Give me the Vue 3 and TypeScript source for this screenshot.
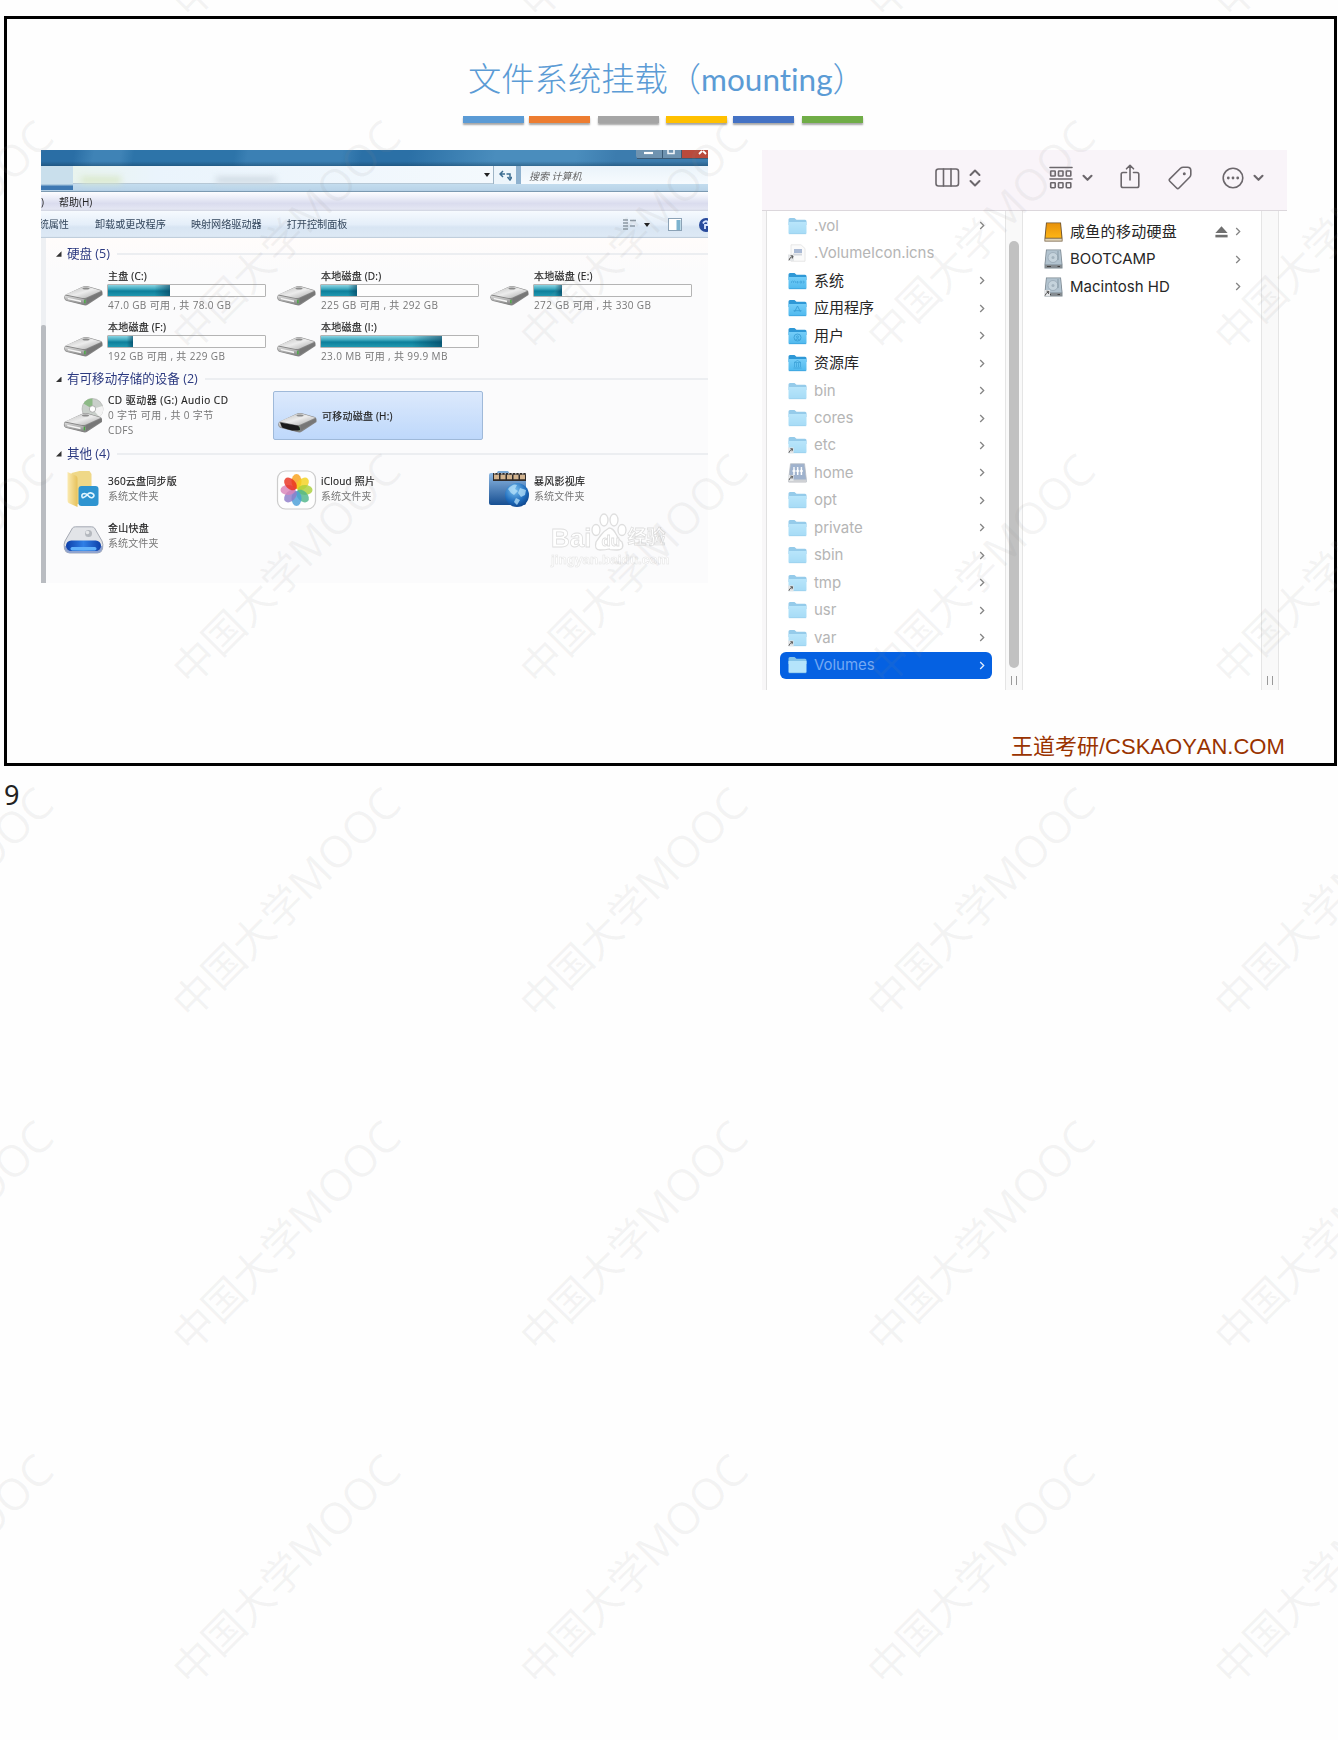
<script setup lang="ts">
interface Disk { name: string; info: string; used: number }
interface Entry { name: string; icon: string; dim: boolean; alias?: boolean; glyph?: string; leaf?: boolean; selected?: boolean }

const stripes: { color: string; gap: number }[] = [
  { color: '#5b9bd5', gap: 0 },
  { color: '#ed7d31', gap: 5 },
  { color: '#a5a5a5', gap: 7.5 },
  { color: '#ffc000', gap: 7 },
  { color: '#4472c4', gap: 6 },
  { color: '#70ad47', gap: 8 },
]

const disks: Disk[] = [
  { name: '主盘 (C:)', info: '47.0 GB 可用 , 共 78.0 GB', used: 39.5 },
  { name: '本地磁盘 (D:)', info: '225 GB 可用 , 共 292 GB', used: 23 },
  { name: '本地磁盘 (E:)', info: '272 GB 可用 , 共 330 GB', used: 18 },
  { name: '本地磁盘 (F:)', info: '192 GB 可用 , 共 229 GB', used: 16 },
  { name: '本地磁盘 (I:)', info: '23.0 MB 可用 , 共 99.9 MB', used: 77 },
]

const others = [
  { name: '360云盘同步版', icon: 'cloud' },
  { name: 'iCloud 照片', icon: 'photos' },
  { name: '暴风影视库', icon: 'storm' },
  { name: '金山快盘', icon: 'kdisk' },
]

const entries: Entry[] = [
  { name: '.vol', icon: 'folder', dim: true },
  { name: '.VolumeIcon.icns', icon: 'file', dim: true, leaf: true },
  { name: '系统', icon: 'folder', dim: false, glyph: 'mac' },
  { name: '应用程序', icon: 'folder', dim: false, glyph: 'apps' },
  { name: '用户', icon: 'folder', dim: false, glyph: 'user' },
  { name: '资源库', icon: 'folder', dim: false, glyph: 'lib' },
  { name: 'bin', icon: 'folder', dim: true },
  { name: 'cores', icon: 'folder', dim: true },
  { name: 'etc', icon: 'folder', dim: true, alias: true },
  { name: 'home', icon: 'home', dim: true, alias: true },
  { name: 'opt', icon: 'folder', dim: true },
  { name: 'private', icon: 'folder', dim: true },
  { name: 'sbin', icon: 'folder', dim: true },
  { name: 'tmp', icon: 'folder', dim: true, alias: true },
  { name: 'usr', icon: 'folder', dim: true },
  { name: 'var', icon: 'folder', dim: true, alias: true },
  { name: 'Volumes', icon: 'folder', dim: true, selected: true },
]

const volumes = [
  { name: '咸鱼的移动硬盘', icon: 'orange', eject: true },
  { name: 'BOOTCAMP', icon: 'hd', eject: false },
  { name: 'Macintosh HD', icon: 'hd', eject: false, alias: true },
]

const petals = ['#f9a11b', '#f3d21f', '#a9cf3a', '#4fb68a', '#4a9fd8', '#8d7cc9', '#d982b8', '#e9301f']

const marks: { x: number; y: number }[] = []
for (let j = -3; j <= 2; j++) {
  for (let i = -1; i <= 3; i++) marks.push({ x: 308 + 347.3 * i, y: 903.5 + 333.4 * j })
}
</script>

<template>
  <div class="page">
    <svg class="defs" width="0" height="0">
      <defs>
        <linearGradient id="dTop" x1="0" y1="0" x2="1" y2="1">
          <stop offset="0" stop-color="#b9b9b9" /><stop offset=".5" stop-color="#ececec" /><stop offset="1" stop-color="#a5a5a5" />
        </linearGradient>
        <linearGradient id="dFront" x1="0" y1="0" x2="0" y2="1">
          <stop offset="0" stop-color="#dedede" /><stop offset="1" stop-color="#7d7d7d" />
        </linearGradient>
        <linearGradient id="fold" x1="0" y1="0" x2="0" y2="1">
          <stop offset="0" stop-color="#74cdf8" /><stop offset="1" stop-color="#4fb9ee" />
        </linearGradient>
        <linearGradient id="yel" x1="0" y1="0" x2="1" y2="0">
          <stop offset="0" stop-color="#fbeab0" /><stop offset="1" stop-color="#e6c25c" />
        </linearGradient>
        <linearGradient id="blu" x1="0" y1="0" x2="0" y2="1">
          <stop offset="0" stop-color="#8fb9e3" /><stop offset="1" stop-color="#174f92" />
        </linearGradient>
        <linearGradient id="org" x1="0" y1="0" x2="0" y2="1">
          <stop offset="0" stop-color="#e8920c" /><stop offset="1" stop-color="#fdb515" />
        </linearGradient>
        <linearGradient id="well" x1="0" y1="0" x2="1" y2="0">
          <stop offset="0" stop-color="#0d3fa8" /><stop offset=".5" stop-color="#2f7fe6" /><stop offset="1" stop-color="#0d3fa8" />
        </linearGradient>
        <radialGradient id="globe" cx=".4" cy=".3" r=".8">
          <stop offset="0" stop-color="#7cc3f2" /><stop offset=".6" stop-color="#1f6cbc" /><stop offset="1" stop-color="#0c3c80" />
        </radialGradient>
        <symbol id="drive" viewBox="0 0 39 22">
          <path d="M1 10 L18 2 Q21 .6 24 1.300 L37 5 Q39 6 38.500 10 L24 19.500 Q22 21 19 20 L3 16 Q0 15 .3 12Z" fill="#858585" />
          <path d="M1.500 9.500 L18 2.200 Q21 1 24 1.700 L37.500 5.800 L22 12.700 Q20 13.400 17 12.800Z" fill="url(#dTop)" />
          <path d="M1 10.500 L18 13.700 Q21 14 22 16 L22 19 Q21 20.300 18 19.300 L3 15.500 Q1 15 1 13Z" fill="url(#dFront)" />
          <path d="M3.500 12.700 L17 15.500 L17 17.200 L4 14.300Z" fill="#f4f4f4" />
          <path d="M22.500 13.500 L38 6.500 L38 9.500 L22.500 19Z" fill="#777" />
          <ellipse cx="22" cy="3.600" rx="3.500" ry="1" fill="#8b8b8b" />
          <rect x="20.200" y="14.800" width="1.400" height="3.500" fill="#43a83d" />
        </symbol>
        <symbol id="chev" viewBox="0 0 6 9"><path d="M1.200 1 L4.700 4.500 L1.200 8" fill="none" stroke="currentColor" stroke-width="1.300" /></symbol>
        <symbol id="alias" viewBox="0 0 7 7"><rect width="6" height="6.500" y=".5" fill="#e4e6e8" /><path d="M1 6.200 Q1.500 3.500 4.800 2.200 M2.600 1.700 L5 2 L4.300 4.500" fill="none" stroke="#555" stroke-width="1" /></symbol>
      </defs>
    </svg>

    <section class="slide">
      <h1>文件系统挂载（<span>mounting</span>）</h1>
      <div class="stripes">
        <i v-for="s in stripes" :key="s.color" :style="{ background: s.color, marginLeft: s.gap + 'px' }" />
      </div>

      <div class="shots">
        <div class="win"><div class="soft">
          <div class="w-title">
            <svg width="72" height="9" viewBox="0 0 72 9">
              <path d="M0 0H26V8.500H3Q0 8.500 0 5.500Z" fill="#6f93b0" /><rect x="27" width="18" height="8.500" fill="#6f93b0" /><rect x="46" width="26" height="8.500" fill="#b94a3c" />
              <path d="M26.500 0v8.500M45.500 0v8.500M1 8.500H72" stroke="#3b5a75" />
              <path d="M8 3h9" stroke="#fff" stroke-width="2.200" /><path d="M32 0v3.500h6V0" fill="none" stroke="#f2f6f9" stroke-width="1.600" /><path d="M63 4l3-3M70 4l-3-3" stroke="#fff" stroke-width="1.800" />
            </svg>
          </div>
          <div class="w-addr">
            <div class="crumb" />
            <div class="path"><span class="smear" /><span class="smear grey" /><i class="tri" /></div>
            <div class="refresh">
              <svg width="13" height="11" viewBox="0 0 13 11"><path d="M1 4h5M4 1L1 4l3 3M7.500 4H11v4M8.500 7L11 10l2-3" fill="none" stroke="#3d6d91" stroke-width="1.500" /></svg>
            </div>
            <div class="search">搜索 计算机</div>
          </div>
          <div class="w-menu"><span>)</span><span>帮助(H)</span></div>
          <div class="w-tools">
            <span class="cut">统属性</span><span>卸载或更改程序</span><span>映射网络驱动器</span><span>打开控制面板</span>
            <div class="w-icons">
              <svg width="13" height="13" viewBox="0 0 13 13"><path d="M0 2h5M0 5h5M0 8h5M0 11h5M7 2.500h6M7 8h5" stroke="#8c99a5" stroke-width="1.600" /></svg>
              <i class="tri" />
              <svg class="pane" width="14" height="13" viewBox="0 0 14 13"><rect x=".5" y=".5" width="13" height="12" fill="#fff" stroke="#8ba2b6" /><rect x="8.500" y="2" width="4" height="10" fill="#7db3cf" /></svg>
              <svg class="help" width="14" height="14" viewBox="0 0 14 14"><circle cx="7" cy="7" r="7" fill="#284a9c" /><path d="M4 5.500Q6 2 9 4v3H6v4" fill="none" stroke="#dbe6ff" stroke-width="1.800" /></svg>
            </div>
          </div>
          <div class="w-main">
            <div class="rail"><i /></div>
            <div class="w-list">
              <div class="group g1"><i class="open" />硬盘 (5)<hr /></div>
              <div class="grid">
                <div v-for="d in disks" :key="d.name" class="disk">
                  <svg class="ic" width="39" height="22"><use href="#drive" /></svg>
                  <div>
                    <p>{{ d.name }}</p>
                    <div class="bar"><i :style="{ width: d.used + '%' }" /></div>
                    <p class="sub">{{ d.info }}</p>
                  </div>
                </div>
              </div>
              <div class="group g2"><i class="open" />有可移动存储的设备 (2)<hr /></div>
              <div class="grid removable">
                <div class="disk cd">
                  <svg class="ic" width="40" height="36" viewBox="0 0 40 36">
                    <circle cx="29" cy="11" r="10.500" fill="#c9cfca" stroke="#aaa" stroke-width=".6" />
                    <path d="M29 11 L20 5.500 A10.500 10.500 0 0 1 29 .5Z" fill="#8dba86" /><path d="M29 11 L39 8 A10.500 10.500 0 0 1 36 19Z" fill="#f3f3f3" />
                    <circle cx="29" cy="11" r="3.200" fill="#fff" stroke="#999" stroke-width=".7" />
                    <use href="#drive" x="0" y="14" width="39" height="22" />
                  </svg>
                  <div><p class="wide">CD 驱动器 (G:) Audio CD</p><p class="sub">0 字节 可用 , 共 0 字节</p><p class="sub">CDFS</p></div>
                </div>
                <div class="disk picked">
                  <svg class="ic" width="39" height="22" viewBox="0 0 39 22"><use href="#drive" width="39" height="22" /><path d="M2 10.500 L19 13.500 Q22 14 22 18 Q15 20 4 15.500Z" fill="#1b1b1b" /></svg>
                  <p>可移动磁盘 (H:)</p>
                </div>
              </div>
              <div class="group g3"><i class="open" />其他 (4)<hr /></div>
              <div class="grid misc">
                <div v-for="o in others" :key="o.name" class="disk">
                  <svg v-if="o.icon === 'cloud'" class="ic" width="40" height="38" viewBox="0 0 40 38">
                    <path d="M8 3 L16 1 H26 L28 4 V34 H10Z" fill="#efd888" /><path d="M4 2 L13 6 Q14 7 14 9 V37 L5 33 Q4 32 4 30Z" fill="url(#yel)" />
                    <rect x="15" y="16" width="20" height="20" rx="3" fill="#2e94d0" /><path d="M19 28q-2-4 2-4.500q2 0 4 2.500t4 1.500q3-2 0-4q-3-1.500-5 1t-5 3.500" fill="none" stroke="#e2f6ff" stroke-width="1.600" />
                  </svg>
                  <svg v-else-if="o.icon === 'photos'" class="ic" width="40" height="40" viewBox="0 0 40 40">
                    <rect x="1" y="1" width="38" height="38" rx="8" fill="#fefefe" stroke="#ccc" stroke-width="1.200" />
                    <ellipse v-for="(p, n) in petals" :key="p" cx="20" cy="11.500" rx="5" ry="7.500" :fill="p" fill-opacity=".82" :transform="`rotate(${n * 45} 20 20)`" />
                  </svg>
                  <svg v-else-if="o.icon === 'storm'" class="ic" width="41" height="38" viewBox="0 0 41 38">
                    <path d="M7 4 L9 1 H19 L21 4Z" fill="#7ba9d6" /><rect x="0" y="3" width="37" height="32" rx="2" fill="url(#blu)" />
                    <rect x="4" y="3" width="33" height="8" fill="#2f2b2a" /><path d="M5 7h32" stroke="#d2b38e" stroke-width="4.500" stroke-dasharray="5 1.500" /><path d="M5 3.800h32" stroke="#ddd" stroke-dasharray="1.500 2" />
                    <circle cx="28" cy="25" r="12" fill="url(#globe)" /><path d="M19 19q5-6 9-4l-2 4 3 2-4 4-3-2zM31 18l6 2-1 5-4 2-3-4zM27 28l4 2-3 5-3-3z" fill="#b7e2fa" fill-opacity=".75" />
                  </svg>
                  <svg v-else class="ic" width="40" height="28" viewBox="0 0 40 28">
                    <path d="M9 2 Q10 .8 12 .8 H28 Q30 .8 31 2 L38.500 15 Q40 18 39 23 Q38 27 34 27 H6 Q2 27 1 23 Q0 18 1.500 15Z" fill="#e2e4e8" stroke="#a4a9b3" />
                    <path d="M1 20 Q1 27 6 27 H34 Q39 27 39 20Z" fill="#8fa3cf" />
                    <circle cx="25" cy="7.500" r="3.500" fill="#b4b8be" /><circle cx="24" cy="6.500" r="1.800" fill="#e6e8ea" /><rect x="2.500" y="14.500" width="35" height="10.500" rx="5.200" fill="url(#well)" /><rect x="7" y="21" width="26" height="3.500" rx="1.700" fill="#62b2fb" />
                  </svg>
                  <div><p>{{ o.name }}</p><p class="sub">系统文件夹</p></div>
                </div>
              </div>
            </div>
            <div class="baidu">
              <div class="b-top"><span>Bai</span>
                <svg width="36" height="38" viewBox="0 0 36 38" fill="#fff" stroke="#dedede" stroke-width="1.300"><ellipse cx="5" cy="17" rx="4" ry="5.500" /><ellipse cx="13" cy="7" rx="4" ry="6" /><ellipse cx="23" cy="7" rx="4" ry="6" /><ellipse cx="31" cy="17" rx="4" ry="5.500" /><path d="M18 15q4 0 7 6t6 8q3 8-5 8t-8-1q-3 1-9 1T5 29q2-3 5-7t8-7z" /></svg>
                <em>du</em><span class="jy">经验</span></div>
              <div class="b-url">jingyan.baidu.com</div>
            </div>
          </div>
        </div></div>

        <div class="mac">
          <div class="m-bar">
            <svg class="i1" width="25" height="19" viewBox="0 0 25 19"><rect x="1" y="1" width="22.500" height="17" rx="2.500" /><path d="M8.500 1v17M16 1v17" /></svg>
            <svg class="i2" width="12" height="18" viewBox="0 0 12 18"><path d="M1.500 6L6 1.500L10.500 6M1.500 12L6 16.500L10.500 12" stroke-width="2" /></svg>
            <svg class="i3" width="24" height="24" viewBox="0 0 24 24"><path d="M1 1.500h22M1 13h22" /><g><rect x="1.700" y="5" width="4.500" height="5" rx=".6" /><rect x="9.500" y="5" width="4.500" height="5" rx=".6" /><rect x="17.300" y="5" width="4.500" height="5" rx=".6" /><rect x="1.700" y="16.700" width="4.500" height="5" rx=".6" /><rect x="9.500" y="16.700" width="4.500" height="5" rx=".6" /><rect x="17.300" y="16.700" width="4.500" height="5" rx=".6" /></g></svg>
            <svg class="i4" width="11" height="8" viewBox="0 0 11 8"><path d="M1.500 1.800L5.500 5.800L9.500 1.800" stroke-width="2.100" /></svg>
            <svg class="i5" width="20" height="25" viewBox="0 0 20 25"><path d="M6.500 8.500H3Q1.200 8.500 1.200 10.300V21.700Q1.200 23.500 3 23.500H17Q18.800 23.500 18.800 21.700V10.300Q18.800 8.500 17 8.500H13.500M10 16V1.500M6.500 4.800L10 1.300L13.500 4.800" /></svg>
            <svg class="i6" width="24" height="24" viewBox="0 0 24 24"><path d="M12.500 2.300Q13.600 1.200 15.200 1.200H19.500Q22.800 1.200 22.800 4.500V8.500Q22.800 10 21.600 11.300L11 22Q9.800 23.200 8.600 22L1.800 15.200Q.7 14 1.800 12.900Z" /><circle cx="16.300" cy="7.700" r=".7" fill="#6c676c" /></svg>
            <svg class="i7" width="22" height="22" viewBox="0 0 22 22"><circle cx="11" cy="11" r="9.800" /><g class="dots"><circle cx="6.300" cy="11" r="1.400" /><circle cx="11" cy="11" r="1.400" /><circle cx="15.700" cy="11" r="1.400" /></g></svg>
            <svg class="i8" width="11" height="8" viewBox="0 0 11 8"><path d="M1.500 1.800L5.500 5.800L9.500 1.800" stroke-width="2.100" /></svg>
          </div>
          <div class="m-body">
            <div class="m-edge" />
            <div class="m-col">
              <div v-for="e in entries" :key="e.name" class="row" :class="{ dim: e.dim, selected: e.selected }">
                <svg v-if="e.icon === 'folder'" class="f" width="19" height="18" viewBox="0 0 19 18">
                  <g :opacity="e.dim ? (e.selected ? 1 : .5) : 1">
                    <path d="M.5 2.500Q.5 1 2 1H6.500L8.500 2.800H17Q18.500 2.800 18.500 4.300V8H.5Z" :fill="e.selected ? '#86c4e8' : '#2e98d6'" />
                    <path d="M.5 5H18.500V15.500Q18.500 17 17 17H2Q.5 17 .5 15.500Z" :fill="e.selected ? '#b5e4fb' : 'url(#fold)'" />
                    <path d="M.8 16.700H18.200" :stroke="e.selected ? '#8ac7ea' : '#3aa2dc'" stroke-width=".8" />
                  </g>
                  <g fill="none" stroke="#3a9fd6" stroke-width=".9">
                    <path v-if="e.glyph === 'mac'" d="M3.500 11V9.500l1-.5 1 .5V11M5.500 9.500l1-.5 1 .5V11M9 9.500h1V11H9zM12 9.200h1.500v1.800H12zM14.700 9.200h1.300v1.800h-1.300" stroke-width=".6" />
                    <path v-if="e.glyph === 'apps'" d="M9.500 7L6.500 13M9.500 7l3 6M5.500 11.700h8" />
                    <g v-if="e.glyph === 'user'"><circle cx="9.500" cy="10.500" r="3.500" /><circle cx="9.500" cy="9.800" r="1" /><path d="M7.500 12.800q2-2 4 0" /></g>
                    <path v-if="e.glyph === 'lib'" d="M6 8.500l3.500-2 3.500 2zM6.500 9v4M8.500 9v4M10.500 9v4M12.500 9v4M5.500 14h8" stroke-width=".7" />
                  </g>
                  <use v-if="e.alias" href="#alias" x="0" y="11" width="6.500" height="6.500" />
                </svg>
                <svg v-else-if="e.icon === 'file'" class="f" width="19" height="18" viewBox="0 0 19 18">
                  <path d="M3 .8H13L17 4.500V17.300H3Z" fill="#fafafa" stroke="#e2e2e2" stroke-width=".8" /><rect x="6" y="5" width="8" height="4" fill="#a9b9d4" /><rect x="5" y="9.500" width="9" height="2" fill="#d4d8de" /><use href="#alias" x="0" y="10" width="7" height="7" />
                </svg>
                <svg v-else class="f" width="19" height="20" viewBox="0 0 19 20">
                  <path d="M2.500.8H16.500L18.300 16V19H.7V16Z" fill="#9fb2cd" stroke="#b6bbc3" stroke-width=".8" /><rect x=".7" y="16.500" width="17.600" height="2.800" fill="#cfd1d4" />
                  <path d="M6 6v6M9.700 6v6M13.400 6v6" stroke="#fff" stroke-width="1.500" /><path d="M4.500 8h10.500" stroke="#fff" stroke-width="1.300" stroke-dasharray="3 .7" /><circle cx="6" cy="5" r=".9" fill="#fff" /><circle cx="9.700" cy="5" r=".9" fill="#fff" /><circle cx="13.400" cy="5" r=".9" fill="#fff" /><use href="#alias" x="0" y="11.500" width="6.500" height="6.500" />
                </svg>
                <span>{{ e.name }}</span>
                <svg v-if="!e.leaf" class="c" width="6" height="9"><use href="#chev" /></svg>
              </div>
            </div>
            <div class="m-scroll"><div class="thumb" /><div class="grip" /></div>
            <div class="m-col two">
              <div v-for="v in volumes" :key="v.name" class="row">
                <svg v-if="v.icon === 'orange'" class="f" width="19" height="20" viewBox="0 0 19 20"><path d="M2 .6H17L18.500 16V19.400H.5V16Z" fill="#6c5433" /><path d="M2.800 1.300H16.200L17.500 15.800H1.500Z" fill="url(#org)" /><rect x="1.200" y="16.600" width="16.600" height="2.200" fill="#ded3b8" /></svg>
                <svg v-else class="f" width="19" height="20" viewBox="0 0 19 20"><path d="M2 .6H17L18.500 15.500V19.400H.5V15.500Z" fill="#7b8790" /><path d="M2.700 1.200H16.300L17.700 15.500H1.300Z" fill="#b2c3cf" /><circle cx="9" cy="8.500" r="5" fill="#c5d3dc" stroke="#93a4b0" stroke-width=".7" /><circle cx="9" cy="8.500" r="1.500" fill="#a3b3be" /><path d="M14 2v9" stroke="#8598a4" /><rect x="1" y="16" width="17" height="3" fill="#858c91" /><path d="M3 17.500h4M13.500 17.500h2.500" stroke="#444" /><use v-if="v.alias" href="#alias" x="0" y="12.500" width="7" height="7" /></svg>
                <span>{{ v.name }}</span>
                <svg v-if="v.eject" class="ej" width="13" height="12" viewBox="0 0 13 12"><path d="M6.500.3L12.600 7H.4Z" fill="#6f6f6f" /><rect x=".4" y="8.800" width="12.200" height="2.600" fill="#6f6f6f" /></svg>
                <svg class="c" width="6" height="9"><use href="#chev" /></svg>
              </div>
            </div>
            <div class="m-scroll end"><div class="grip" /></div>
          </div>
        </div>
      </div>

      <footer>王道考研/CSKAOYAN.COM</footer>
    </section>
    <div class="num">9</div>

    <svg class="marks" width="1338" height="1740">
      <g v-for="(m, n) in marks" :key="n" :transform="`translate(${m.x} ${m.y}) rotate(-45)`">
        <text class="mk-cjk" text-anchor="end">中国大学</text>
        <text class="mk-lat" y="-1">MOOC</text>
      </g>
    </svg>
  </div>
</template>

<style>
body { margin: 0; background: #fefefe; }
</style>

<style scoped>
* { box-sizing: border-box; }
p, h1 { margin: 0; font-weight: inherit; }
.page { position: relative; width: 1338px; height: 1740px; overflow: hidden; padding: 16px 0 0 4px; background: #fefefe; }
.defs { position: absolute; }
.slide { width: 1333px; height: 750px; border: 3px solid #000; display: flex; flex-direction: column; align-items: flex-start; }
h1 { margin: 33px 0 0 461px; height: 50px; line-height: 50px; font: 300 33.300px/50px "Noto Sans CJK SC", sans-serif; color: #5b9bd5; white-space: nowrap; }
h1 span { font-family: Lato, sans-serif; font-weight: 400; font-size: 31.500px; font-variant-ligatures: none; }
.stripes { display: flex; margin: 14px 0 0 456px; }
.stripes i { width: 61px; height: 7px; box-shadow: 0 2px 2px rgba(0, 0, 0, .35); }
.shots { display: flex; height: 540px; margin: 27px 0 0 34px; align-items: flex-start; }

/* Windows explorer */
.win { width: 667px; height: 433px; overflow: hidden; background: #fbfbfc; }
.soft { width: 667px; height: 433px; filter: blur(.45px); font: 10px/14px "Open Sans", "Noto Sans CJK SC", sans-serif; color: #222; }
.w-title { height: 16px; display: flex; justify-content: flex-end; background: linear-gradient(rgba(0,0,0,0) 70%, rgba(20,60,90,.45)), linear-gradient(100deg, #2a6ea5 0 5%, #3f83b6 8% 12%, #2d74a9 14% 29%, #3b80b4 31% 45%, #2b70a6 48% 55%, #4a8dbd 68% 80%, #3c7cae 86%); }
.w-addr { height: 26px; display: flex; background: linear-gradient(#e6f1f8 0 68%, #c3dcee 70%, #b9d3e8 94%, #5f7f98); }
.crumb { width: 32px; height: 24px; background: linear-gradient(#c9dfec 75%, #3d78b2 85%); }
.path { width: 420px; height: 18px; padding: 0 3px 0 8px; display: flex; align-items: center; background: linear-gradient(90deg, #e9f4ee, #eaf4fc 20%, #f4f9fd); border-bottom: 1px solid #b6c8d6; }
.smear { width: 40px; height: 6px; margin-top: 10px; background: #d8e7c6; filter: blur(3px); }
.smear.grey { width: 60px; margin-left: 95px; background: #ccd7e0; }
.tri { border: 3px solid transparent; border-top: 4px solid #222; border-bottom: 0; }
.path .tri { margin-left: auto; }
.refresh { width: 23px; height: 18px; display: flex; align-items: center; justify-content: center; border-left: 1px solid #9fb5c6; background: #edf5fb; }
.search { flex: 1; height: 18px; padding-left: 8px; line-height: 20px; border-left: 5px solid #8fb2cf; font-style: italic; color: #666; background: linear-gradient(#eaf3fa, #f7fbfe); white-space: nowrap; }
.w-menu { height: 19px; display: flex; gap: 15px; line-height: 20px; background: linear-gradient(#fdfdff, #eceef8 30%, #dadcee 60%, #e4e6f3 90%, #cfd3df); }
.w-tools { height: 27px; display: flex; line-height: 26px; font-size: 10.150px; color: #33465c; background: linear-gradient(#f6fafe, #e4eef9 50%, #d8e5f3 60%, #dde9f5 94%, #b3c2d1); white-space: nowrap; }
.w-tools span { margin-right: 25px; }
.w-tools .cut { width: 28px; margin-right: 26px; direction: rtl; overflow: hidden; }
.w-icons { margin-left: auto; display: flex; align-items: center; }
.w-icons .tri { margin-left: 8px; }
.w-icons .pane { margin-left: 18px; }
.w-icons .help { margin: 0 -5px 0 17px; }
.w-main { position: relative; display: flex; height: 345px; background: linear-gradient(#fffcfb, #fbfbfc 10%); }
.rail { width: 5px; background: #eef0f3; padding-top: 87px; }
.rail i { display: block; height: 258px; background: #b9bcc1; border-radius: 2px 2px 0 0; }
.w-list { flex: 1; padding-left: 10px; }
.group { display: flex; align-items: center; height: 16px; font-size: 12.550px; line-height: 16px; color: #2c3a80; white-space: nowrap; }
.group .open { width: 5.500px; height: 5.500px; margin-right: 5.500px; background: #333; clip-path: polygon(100% 0, 100% 100%, 0 100%); }
.group hr { flex: 1; height: 2px; margin: 0 0 0 7px; border: 0; background: #eceef1; }
.g1 { margin-top: 8px; }
.g2 { margin-top: -.3px; }
.g3 { margin-top: 5.500px; }
.grid { display: grid; grid-template-columns: repeat(3, 213px); margin-left: 8px; padding-top: 7px; }
.disk { display: flex; height: 51.300px; white-space: nowrap; }
.disk .ic { width: 41px; flex: none; margin: 16px 3px 0 -1px; }
.disk p { padding-left: 1px; line-height: 14px; letter-spacing: .22px; -webkit-text-stroke: .15px; }
.disk p.sub { color: #777; -webkit-text-stroke: 0; letter-spacing: .37px; }
.disk p.wide { letter-spacing: .5px; }
.bar { width: 159px; height: 13px; margin: 1px 0; border: 1px solid #b4b4b4; border-radius: 1px; background: #fdfdfd; }
.bar i { display: block; height: 100%; background: linear-gradient(90deg, rgba(0,0,0,0) 75%, rgba(0,50,80,.55)), linear-gradient(#8ad4e2, #3fa9bf 35%, #0d7f9b 55%, #2098b0); }
.removable { padding-top: 4px; }
.removable .disk { height: 49px; }
.cd .ic { margin-top: 7px; }
.cd p.sub { margin-top: 1px; }
.cd > div { padding-top: 2px; }
.picked { width: 210px; margin-left: -4px; padding-left: 4px; border: 1px solid #9fb9d9; border-radius: 2px; background: linear-gradient(#dce9fc, #bed8fb); align-items: center; }
.picked .ic { margin: 14px 3px 0 -1px; }
.misc { padding-top: 12px; grid-auto-rows: 47.300px; }
.misc .disk { height: 47px; }
.misc .ic { margin-top: -4px; }
.misc .disk:nth-child(4) .ic { margin-top: 5px; }
.misc p.sub { margin-top: 1px; letter-spacing: .1px; }
.baidu { position: absolute; left: 510px; top: 273px; width: 124px; font-weight: 700; color: #fff; }
.b-top { display: flex; align-items: flex-end; height: 40px; font: 700 26px/26px "Liberation Sans", "Noto Sans CJK SC", sans-serif; -webkit-text-stroke: .8px #dedede; }
.b-top em { width: 0; margin: 0; font: 700 15px/20px "Liberation Sans", sans-serif; text-indent: -26px; }
.b-top .jy { font-size: 19px; }
.b-url { font: 700 13.500px/16px "Liberation Sans", sans-serif; -webkit-text-stroke: .6px #e6e6e6; margin-top: 1px; }

/* macOS Finder */
.mac { width: 525px; height: 540px; margin-left: 54px; font: 15px/20px Inter, "Noto Sans CJK SC", sans-serif; color: #262626; }
.m-bar { height: 61px; padding-bottom: 5px; display: flex; align-items: center; background: #f9f4f9; border-bottom: 1px solid #dcd7dc; }
.m-bar svg { flex: none; fill: none; stroke: #6c676c; stroke-width: 1.600; stroke-linecap: round; stroke-linejoin: round; }
.m-bar .dots { fill: #6c676c; stroke: none; }
.m-bar .i1 { margin-left: 173px; }
.m-bar .i2 { margin-left: 9px; }
.m-bar .i3 { margin-left: 68px; }
.m-bar .i4 { margin-left: 9px; }
.m-bar .i5 { margin-left: 27px; margin-top: -3px; }
.m-bar .i6 { margin-left: 28px; }
.m-bar .i7 { margin-left: 30px; }
.m-bar .i8 { margin-left: 9px; }
.m-body { display: flex; height: 479px; width: 517px; }
.m-edge { width: 5px; background: #f8f7f8; border-right: 1px solid #e0e0e0; }
.m-col { width: 238px; padding: 1px 13px 0; background: #fff; }
.row { display: flex; align-items: center; height: 27.470px; padding: 0 7px 0 8px; border-radius: 6px; white-space: nowrap; }
.row .f { flex: none; margin-right: 7px; }
.row .c { margin-left: auto; color: #858585; }
.row.dim span { color: #b5b5b5; letter-spacing: -.05px; }
.row.selected { background: #0561e2; }
.row.selected span { color: #74a9f4; }
.row.selected .c { color: #e2edfd; }
.m-scroll { width: 18px; display: flex; flex-direction: column; align-items: center; padding-top: 30px; background: #f9f9f9; border: solid #e5e5e5; border-width: 0 1px; }
.thumb { width: 10px; height: 427px; border-radius: 5px; background: #c1c1c1; }
.grip { width: 6px; height: 9px; margin-top: 8px; border: solid #999; border-width: 0 1px; }
.m-col.two { padding: 7px 13px 0 12px; }
.two .row { padding: 0 7px 0 9px; }
.two .row:first-child span { letter-spacing: .3px; }
.two .ej { margin-left: auto; }
.two .ej + .c { margin-left: 7px; }
.m-scroll.end .grip { margin-top: 435px; }

footer { margin: 42px 0 0 1004px; font: 22px/30px "Liberation Sans", "Noto Sans CJK SC", sans-serif; font-kerning: none; color: #993300; white-space: nowrap; }
.num { height: 38px; margin-top: 10px; font: 27px/38px "Noto Sans", sans-serif; color: #222; }
.marks { position: absolute; left: 0; top: 0; pointer-events: none; fill: rgba(140, 140, 140, .09); }
.mk-cjk { font: 400 41.500px "Noto Sans CJK SC", sans-serif; }
.mk-lat { font: 400 44px "Open Sans", sans-serif; }
</style>
